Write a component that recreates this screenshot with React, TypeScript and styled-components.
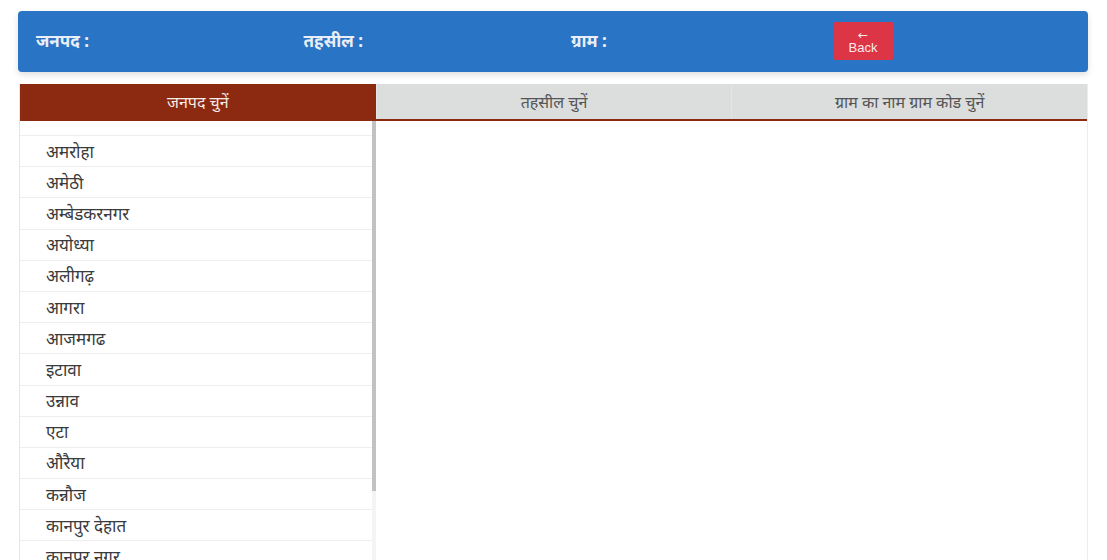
import React from "react";
import styled, { createGlobalStyle } from "styled-components";

const GlobalStyle = createGlobalStyle`
  html, body {
    margin: 0;
    padding: 0;
    background: #ffffff;
    overflow: hidden;
    font-family: "Noto Sans", "Liberation Sans", sans-serif;
  }
`;

const Page = styled.div`
  padding: 11px 19px 0 18px;
  display: flex;
  flex-direction: column;
  gap: 12px;
`;

const Header = styled.div`
  height: 61px;
  background: #2a74c5;
  border-radius: 4px;
  box-shadow: 0 3px 6px rgba(0, 0, 0, 0.12);
  display: grid;
  grid-template-columns: repeat(4, 1fr);
  align-items: center;
`;

const HeaderCell = styled.div`
  padding-left: 18px;
  display: flex;
  align-items: center;
`;

const HeaderLabel = styled.span`
  color: #e9eef7;
  font-size: 17px;
  font-weight: 700;
  margin-top: -2px;
`;

const BackButton = styled.button`
  width: 61px;
  height: 38px;
  margin-left: -6px;
  margin-top: -2px;
  border: none;
  border-radius: 3px;
  background: #dc3545;
  color: #fbe9eb;
  font-family: "Liberation Sans", Arial, sans-serif;
  font-size: 13px;
  line-height: 14px;
  padding: 2px 0 0;
  display: flex;
  flex-direction: column;
  align-items: center;
  justify-content: center;
`;

const Arrow = styled.span`
  font-family: "DejaVu Sans", sans-serif;
  font-size: 12px;
  line-height: 12px;
`;

const Panel = styled.div`
  margin-left: 1px;
  border-left: 1px solid #e6e6e6;
  border-right: 1px solid #ececec;
  display: flex;
  flex-direction: column;
`;

const Tabs = styled.div`
  display: grid;
  grid-template-columns: repeat(3, 1fr);
  height: 35px;
  border-bottom: 2px solid #8a2a12;
`;

const Tab = styled.div<{ $active?: boolean }>`
  display: flex;
  align-items: center;
  justify-content: center;
  font-size: 16px;
  background: ${(p) => (p.$active ? "#8b2a11" : "#dcdddd")};
  color: ${(p) => (p.$active ? "#f5ebe7" : "#555555")};
  border-left: ${(p) => (p.$active ? "none" : "1px solid #e4e5e5")};
`;

const Body = styled.div`
  display: flex;
`;

const List = styled.div`
  width: 352px;
  height: 460px;
  overflow: hidden;
`;

const ScrollTrack = styled.div`
  width: 4px;
  height: 460px;
  background: #f4f4f4;
`;

const ScrollThumb = styled.div`
  height: 370px;
  background: #c2c2c2;
`;

const TopRow = styled.div`
  height: 14px;
  border-bottom: 1px solid #eeeeee;
`;

const Row = styled.div`
  height: 30.2px;
  border-bottom: 1px solid #eeeeee;
  padding-left: 26px;
  display: flex;
  align-items: center;
  font-size: 17px;
  color: #3a3a3a;
`;

const Rest = styled.div`
  flex: 1;
`;

const districts = [
  "अमरोहा",
  "अमेठी",
  "अम्बेडकरनगर",
  "अयोध्या",
  "अलीगढ़",
  "आगरा",
  "आजमगढ",
  "इटावा",
  "उन्नाव",
  "एटा",
  "औरैया",
  "कन्नौज",
  "कानपुर देहात",
  "कानपुर नगर",
  "कासगंज",
];

export default function App() {
  return (
    <>
      <GlobalStyle />
      <Page>
        <Header>
          <HeaderCell>
            <HeaderLabel>जनपद :</HeaderLabel>
          </HeaderCell>
          <HeaderCell>
            <HeaderLabel>तहसील :</HeaderLabel>
          </HeaderCell>
          <HeaderCell>
            <HeaderLabel>ग्राम :</HeaderLabel>
          </HeaderCell>
          <HeaderCell>
            <BackButton>
              <Arrow>←</Arrow>
              <span>Back</span>
            </BackButton>
          </HeaderCell>
        </Header>
        <Panel>
          <Tabs>
            <Tab $active>जनपद चुनें</Tab>
            <Tab>तहसील चुनें</Tab>
            <Tab>ग्राम का नाम ग्राम कोड चुनें</Tab>
          </Tabs>
          <Body>
            <List>
              <TopRow />
              {districts.map((d) => (
                <Row key={d}>{d}</Row>
              ))}
            </List>
            <ScrollTrack>
              <ScrollThumb />
            </ScrollTrack>
            <Rest />
          </Body>
        </Panel>
      </Page>
    </>
  );
}
